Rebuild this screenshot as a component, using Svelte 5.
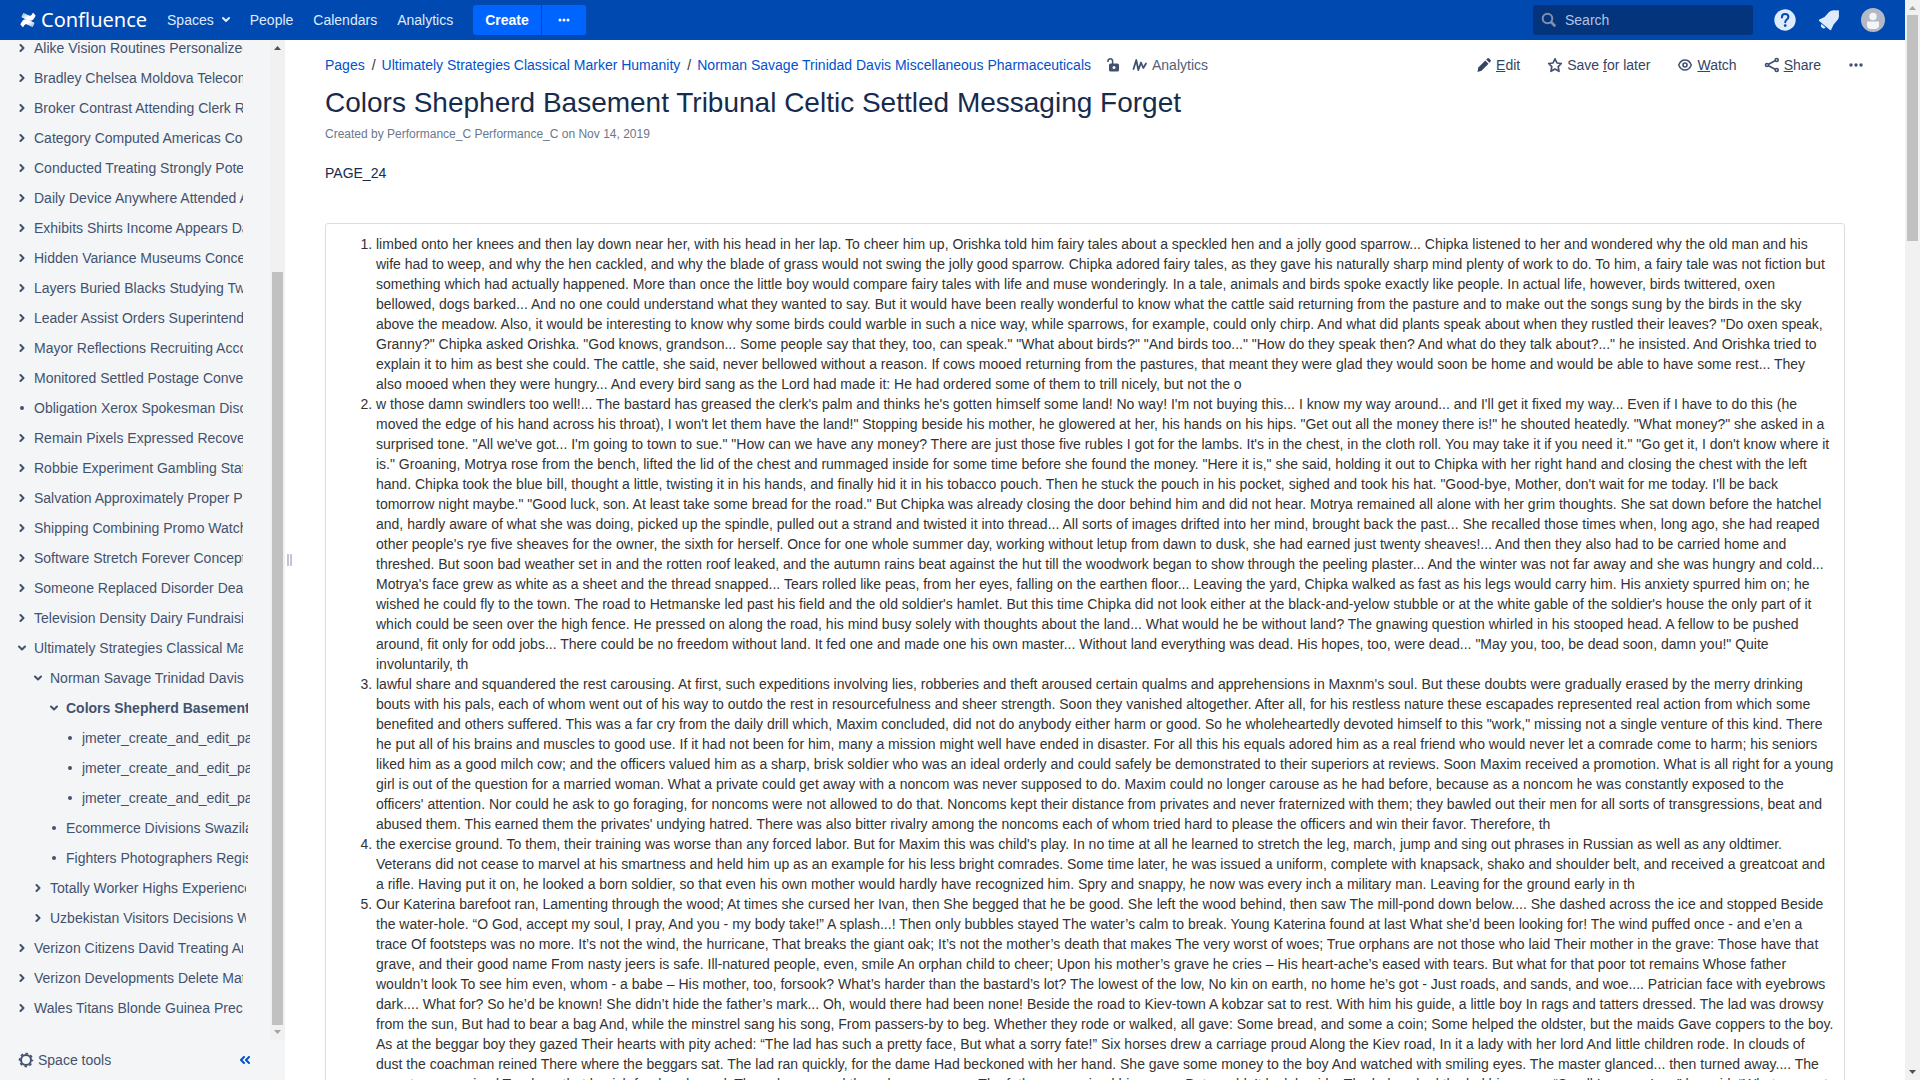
<script>
  const tree = [
    ['Alike Vision Routines Personalized', 0, 'closed'],
    ['Bradley Chelsea Moldova Telecommunications', 0, 'closed'],
    ['Broker Contrast Attending Clerk Roads', 0, 'closed'],
    ['Category Computed Americas Cooking', 0, 'closed'],
    ['Conducted Treating Strongly Potential', 0, 'closed'],
    ['Daily Device Anywhere Attended Arms', 0, 'closed'],
    ['Exhibits Shirts Income Appears Daily', 0, 'closed'],
    ['Hidden Variance Museums Concept', 0, 'closed'],
    ['Layers Buried Blacks Studying Twice', 0, 'closed'],
    ['Leader Assist Orders Superintendent', 0, 'closed'],
    ['Mayor Reflections Recruiting Accounts', 0, 'closed'],
    ['Monitored Settled Postage Conventions', 0, 'closed'],
    ['Obligation Xerox Spokesman Discount', 0, 'leaf'],
    ['Remain Pixels Expressed Recovery', 0, 'closed'],
    ['Robbie Experiment Gambling States', 0, 'closed'],
    ['Salvation Approximately Proper Prices', 0, 'closed'],
    ['Shipping Combining Promo Watches', 0, 'closed'],
    ['Software Stretch Forever Concepts', 0, 'closed'],
    ['Someone Replaced Disorder Deaths', 0, 'closed'],
    ['Television Density Dairy Fundraising', 0, 'closed'],
    ['Ultimately Strategies Classical Marker Humanity', 0, 'open'],
    ['Norman Savage Trinidad Davis Miscellaneous', 1, 'open'],
    ['Colors Shepherd Basement Tribunal', 2, 'open', true],
    ['jmeter_create_and_edit_page', 3, 'leaf'],
    ['jmeter_create_and_edit_page', 3, 'leaf'],
    ['jmeter_create_and_edit_page', 3, 'leaf'],
    ['Ecommerce Divisions Swaziland', 2, 'leaf'],
    ['Fighters Photographers Registration', 2, 'leaf'],
    ['Totally Worker Highs Experienced', 1, 'closed'],
    ['Uzbekistan Visitors Decisions Wage', 1, 'closed'],
    ['Verizon Citizens David Treating Arms', 0, 'closed'],
    ['Verizon Developments Delete Mates', 0, 'closed'],
    ['Wales Titans Blonde Guinea Precise', 0, 'closed'],
  ];

  const paragraphs = [
    `limbed onto her knees and then lay down near her, with his head in her lap. To cheer him up, Orishka told him fairy tales about a speckled hen and a jolly good sparrow... Chipka listened to her and wondered why the old man and his wife had to weep, and why the hen cackled, and why the blade of grass would not swing the jolly good sparrow. Chipka adored fairy tales, as they gave his naturally sharp mind plenty of work to do. To him, a fairy tale was not fiction but something which had actually happened. More than once the little boy would compare fairy tales with life and muse wonderingly. In a tale, animals and birds spoke exactly like people. In actual life, however, birds twittered, oxen bellowed, dogs barked... And no one could understand what they wanted to say. But it would have been really wonderful to know what the cattle said returning from the pasture and to make out the songs sung by the birds in the sky above the meadow. Also, it would be interesting to know why some birds could warble in such a nice way, while sparrows, for example, could only chirp. And what did plants speak about when they rustled their leaves? "Do oxen speak, Granny?" Chipka asked Orishka. "God knows, grandson... Some people say that they, too, can speak." "What about birds?" "And birds too..." "How do they speak then? And what do they talk about?..." he insisted. And Orishka tried to explain it to him as best she could. The cattle, she said, never bellowed without a reason. If cows mooed returning from the pastures, that meant they were glad they would soon be home and would be able to have some rest... They also mooed when they were hungry... And every bird sang as the Lord had made it: He had ordered some of them to trill nicely, but not the o`,
    `w those damn swindlers too well!... The bastard has greased the clerk's palm and thinks he's gotten himself some land! No way! I'm not buying this... I know my way around... and I'll get it fixed my way... Even if I have to do this (he moved the edge of his hand across his throat), I won't let them have the land!" Stopping beside his mother, he glowered at her, his hands on his hips. "Get out all the money there is!" he shouted heatedly. "What money?" she asked in a surprised tone. "All we've got... I'm going to town to sue." "How can we have any money? There are just those five rubles I got for the lambs. It's in the chest, in the cloth roll. You may take it if you need it." "Go get it, I don't know where it is." Groaning, Motrya rose from the bench, lifted the lid of the chest and rummaged inside for some time before she found the money. "Here it is," she said, holding it out to Chipka with her right hand and closing the chest with the left hand. Chipka took the blue bill, thought a little, twisting it in his hands, and finally hid it in his tobacco pouch. Then he stuck the pouch in his pocket, sighed and took his hat. "Good-bye, Mother, don't wait for me today. I'll be back tomorrow night maybe." "Good luck, son. At least take some bread for the road." But Chipka was already closing the door behind him and did not hear. Motrya remained all alone with her grim thoughts. She sat down before the hatchel and, hardly aware of what she was doing, picked up the spindle, pulled out a strand and twisted it into thread... All sorts of images drifted into her mind, brought back the past... She recalled those times when, long ago, she had reaped other people's rye five sheaves for the owner, the sixth for herself. Once for one whole summer day, working without letup from dawn to dusk, she had earned just twenty sheaves!... And then they also had to be carried home and threshed. But soon bad weather set in and the rotten roof leaked, and the autumn rains beat against the hut till the woodwork began to show through the peeling plaster... And the winter was not far away and she was hungry and cold... Motrya's face grew as white as a sheet and the thread snapped... Tears rolled like peas, from her eyes, falling on the earthen floor... Leaving the yard, Chipka walked as fast as his legs would carry him. His anxiety spurred him on; he wished he could fly to the town. The road to Hetmanske led past his field and the old soldier's hamlet. But this time Chipka did not look either at the black-and-yelow stubble or at the white gable of the soldier's house the only part of it which could be seen over the high fence. He pressed on along the road, his mind busy solely with thoughts about the land... What would he be without land? The gnawing question whirled in his stooped head. A fellow to be pushed around, fit only for odd jobs... There could be no freedom without land. It fed one and made one his own master... Without land everything was dead. His hopes, too, were dead... "May you, too, be dead soon, damn you!" Quite involuntarily, th`,
    `lawful share and squandered the rest carousing. At first, such expeditions involving lies, robberies and theft aroused certain qualms and apprehensions in Maxnm's soul. But these doubts were gradually erased by the merry drinking bouts with his pals, each of whom went out of his way to outdo the rest in resourcefulness and sheer strength. Soon they vanished altogether. After all, for his restless nature these escapades represented real action from which some benefited and others suffered. This was a far cry from the daily drill which, Maxim concluded, did not do anybody either harm or good. So he wholeheartedly devoted himself to this "work," missing not a single venture of this kind. There he put all of his brains and muscles to good use. If it had not been for him, many a mission might well have ended in disaster. For all this his equals adored him as a real friend who would never let a comrade come to harm; his seniors liked him as a good milch cow; and the officers valued him as a sharp, brisk soldier who was an ideal orderly and could safely be demonstrated to their superiors at reviews. Soon Maxim received a promotion. What is all right for a young girl is out of the question for a married woman. What a private could get away with a noncom was never supposed to do. Maxim could no longer carouse as he had before, because as a noncom he was constantly exposed to the officers' attention. Nor could he ask to go foraging, for noncoms were not allowed to do that. Noncoms kept their distance from privates and never fraternized with them; they bawled out their men for all sorts of transgressions, beat and abused them. This earned them the privates' undying hatred. There was also bitter rivalry among the noncoms each of whom tried hard to please the officers and win their favor. Therefore, th`,
    `the exercise ground. To them, their training was worse than any forced labor. But for Maxim this was child's play. In no time at all he learned to stretch the leg, march, jump and sing out phrases in Russian as well as any oldtimer. Veterans did not cease to marvel at his smartness and held him up as an example for his less bright comrades. Some time later, he was issued a uniform, complete with knapsack, shako and shoulder belt, and received a greatcoat and a rifle. Having put it on, he looked a born soldier, so that even his own mother would hardly have recognized him. Spry and snappy, he now was every inch a military man. Leaving for the ground early in th`,
    `Our Katerina barefoot ran, Lamenting through the wood; At times she cursed her Ivan, then She begged that he be good. She left the wood behind, then saw The mill-pond down below.... She dashed across the ice and stopped Beside the water-hole. “O God, accept my soul, I pray, And you - my body take!” A splash...! Then only bubbles stayed The water’s calm to break. Young Katerina found at last What she’d been looking for! The wind puffed once - and e’en a trace Of footsteps was no more. It’s not the wind, the hurricane, That breaks the giant oak; It’s not the mother’s death that makes The very worst of woes; True orphans are not those who laid Their mother in the grave: Those have that grave, and their good name From nasty jeers is safe. Ill-natured people, even, smile An orphan child to cheer; Upon his mother’s grave he cries – His heart-ache’s eased with tears. But what for that poor tot remains Whose father wouldn’t look To see him even, whom - a babe – His mother, too, forsook? What’s harder than the bastard’s lot? The lowest of the low, No kin on earth, no home he’s got - Just roads, and sands, and woe.... Patrician face with eyebrows dark.... What for? So he’d be known! She didn’t hide the father’s mark... Oh, would there had been none! Beside the road to Kiev-town A kobzar sat to rest. With him his guide, a little boy In rags and tatters dressed. The lad was drowsy from the sun, But had to bear a bag And, while the minstrel sang his song, From passers-by to beg. Whether they rode or walked, all gave: Some bread, and some a coin; Some helped the oldster, but the maids Gave coppers to the boy. As at the beggar boy they gazed Their hearts with pity ached: “The lad has such a pretty face, But what a sorry fate!” Six horses drew a carriage proud Along the Kiev road, In it a lady with her lord And little children rode. In clouds of dust the coachman reined There where the beggars sat. The lad ran quickly, for the dame Had beckoned with her hand. She gave some money to the boy And watched with smiling eyes. The master glanced... then turned away.... The monster recognised To whom that boyish forehead owed. Those brows, and those brown eyes.... The father recognised his own.... But wouldn’t look beside. The lady asked the lad his name. “Small Ivan, ma’am,” he said. “What a sweet name!”`,
  ];
</script>

<div class="window">
  <div class="page">
    <header>
      <a class="logo" href="#home">
        <svg width="16" height="16" viewBox="0 0 16 16" aria-hidden="true">
          <defs>
            <linearGradient id="lg1" x1="1" y1="1" x2="0" y2="0"><stop offset="0" stop-color="#fff" /><stop offset=".5" stop-color="#fff" /><stop offset="1" stop-color="#fff" stop-opacity=".5" /></linearGradient>
            <linearGradient id="lg2" x1="0" y1="0" x2="1" y2="1"><stop offset="0" stop-color="#fff" /><stop offset=".5" stop-color="#fff" /><stop offset="1" stop-color="#fff" stop-opacity=".5" /></linearGradient>
          </defs>
          <path fill="url(#lg2)" d="M.6 11.7 2.2 9.3C3.8 7 6 6.800 8.600 8l5.400 2.500q.7.300.4 1L13.100 14.500q-.3.700-1 .4L7.500 12.700C5.800 12 5 12.300 4.200 13.600L3.500 14.800q-.4.600-1 .2L.8 13q-.6-.6-.2-1.300Z" />
          <path fill="url(#lg1)" d="M15.400 4.300 13.800 6.700C12.200 9 10 9.200 7.400 8L2 5.500q-.7-.3-.4-1L2.900 1.500q.3-.7 1-.4l4.600 2.200c1.700.7 2.500.4 3.300-.9L12.500 1.200q.4-.6 1-.2L15.200 3q.6.600.2 1.300Z" />
        </svg>
        <span>Confluence</span>
      </a>
      <nav>
        <button class="navitem">Spaces
          <svg width="8" height="6" viewBox="0 0 8 6" aria-hidden="true"><path d="M1 1l3 3 3-3" fill="none" stroke="currentColor" stroke-width="2" stroke-linecap="round" stroke-linejoin="round" /></svg>
        </button>
        <a href="#people">People</a>
        <a href="#calendars">Calendars</a>
        <a href="#analytics">Analytics</a>
      </nav>
      <div class="create">
        <button>Create</button>
        <button class="more" aria-label="Create from template">
          <svg width="12" height="4" viewBox="0 0 12 4" fill="currentColor" aria-hidden="true"><circle cx="2" cy="2" r="1.500" /><circle cx="6" cy="2" r="1.500" /><circle cx="10" cy="2" r="1.500" /></svg>
        </button>
      </div>
      <div class="tools">
        <label class="search">
          <svg width="16" height="16" viewBox="0 0 16 16" aria-hidden="true"><g fill="none" stroke="#8290ab" stroke-width="2"><circle cx="6.500" cy="6.500" r="4.800" /><path d="M10.500 10.500 13.500 13.500" stroke-linecap="round" stroke-width="2.600" /></g></svg>
          <input type="text" placeholder="Search" aria-label="Search" />
        </label>
        <button aria-label="Help">
          <svg width="24" height="24" viewBox="0 0 24 24" aria-hidden="true"><circle cx="12" cy="12" r="10.700" fill="#deebff" /><path d="M8.900 9.400C8.900 7.300 10.200 6 12.100 6s3.300 1.200 3.300 2.900c0 2.500-3.200 2.600-3.200 5.300" fill="none" stroke="#0049b0" stroke-width="2" stroke-linecap="round" /><circle cx="12.200" cy="17.600" r="1.400" fill="#0049b0" /></svg>
        </button>
        <button aria-label="Notifications">
          <svg width="24" height="24" viewBox="0 0 24 24" fill="#deebff" aria-hidden="true"><path d="M2.300 11.600 7.600 9 11.600 4.500C13.500 2.600 16 1.900 19 2.400L21 2.300Q22 2.300 22 3.300L21.800 5.200C22.400 8.300 21.800 10.800 19.900 12.800L16.600 16.500 14.300 21.600Q13.800 22.500 13 21.900L2.200 12.900Q1.400 12.200 2.300 11.600Z" /><path d="M4.600 16.100 8.600 19.400A2.500 2.500 0 0 1 4.600 16.100Z" /></svg>
        </button>
        <button aria-label="User menu">
          <svg width="24" height="24" viewBox="0 0 24 24" aria-hidden="true"><circle cx="12" cy="12" r="12" fill="#b3bac5" /><circle cx="12" cy="8.500" r="3.700" fill="#f4f5f7" /><path d="M6 13.500h12V17q0 4-4 4h-4q-4 0-4-4Z" fill="#f4f5f7" /></svg>
        </button>
      </div>
    </header>

    <div class="body">
      <aside>
        <div class="scroller">
          <ul class="tree">
            {#each tree as [name, level, kind, current]}
              <li class="level{level}" class:current>
                <span class="mark">
                  {#if kind === 'leaf'}
                    <svg width="8" height="8" viewBox="0 0 8 8" aria-hidden="true"><circle cx="4" cy="4" r="2" fill="currentColor" /></svg>
                  {:else}
                    <svg class:open={kind === 'open'} width="8" height="8" viewBox="0 0 8 8" aria-hidden="true"><path d="M2.500 1l3 3-3 3" fill="none" stroke="currentColor" stroke-width="2" stroke-linecap="round" stroke-linejoin="round" /></svg>
                  {/if}
                </span>
                <a href="#page">{name}</a>
              </li>
            {/each}
          </ul>
          <div class="bar side" aria-hidden="true">
            <svg class="dark" width="7" height="4" viewBox="0 0 7 4"><path d="M0 4 3.500 0 7 4Z" /></svg>
            <div class="track"><div class="thumb"></div></div>
            <svg width="7" height="4" viewBox="0 0 7 4"><path d="M0 0 3.500 4 7 0Z" /></svg>
          </div>
        </div>
        <div class="spacetools">
          <button>
            <svg width="16" height="16" viewBox="0 0 16 16" aria-hidden="true"><g fill="none" stroke="#42526e"><circle cx="8" cy="8" r="5" stroke-width="2" /><circle cx="8" cy="8" r="6.500" stroke-width="1.500" stroke-dasharray="2.600 2.505" stroke-dashoffset="1.300" /></g></svg>
            Space tools
          </button>
          <button class="collapse" aria-label="Collapse sidebar">
            <svg width="10" height="8" viewBox="0 0 10 8" aria-hidden="true"><path d="M4 1 1 4l3 3M9 1 6 4l3 3" fill="none" stroke="#0052cc" stroke-width="2" stroke-linecap="round" stroke-linejoin="round" /></svg>
          </button>
        </div>
      </aside>
      <div class="handle" aria-hidden="true"><i></i><i></i></div>

      <main>
        <div class="top">
          <ol class="crumbs">
            <li><a href="#pages">Pages</a></li>
            <li><a href="#parent">Ultimately Strategies Classical Marker Humanity</a></li>
            <li><a href="#norman">Norman Savage Trinidad Davis Miscellaneous Pharmaceuticals</a></li>
          </ol>
          <button class="lock" aria-label="Unrestricted">
            <svg width="16" height="16" viewBox="0 0 16 16" aria-hidden="true"><path d="M2 5V4a2.300 2.300 0 0 1 4.600 0V7" fill="none" stroke="#42526e" stroke-width="1.500" /><path fill="#42526e" fill-rule="evenodd" d="M4.500 6.500h7q1.500 0 1.500 1.500v5q0 1.500-1.500 1.500h-7Q3 14.500 3 13V8q0-1.500 1.500-1.500ZM8 9a1.500 1.500 0 1 0 0 3 1.500 1.500 0 1 0 0-3Z" /></svg>
          </button>
          <a class="stats" href="#stats">
            <svg width="16" height="16" viewBox="0 0 16 16" aria-hidden="true"><path d="M1.500 12 4.300 3 6.300 13 9 5.500 11.300 11 14 6.500" fill="none" stroke="#42526e" stroke-width="1.800" stroke-linecap="round" stroke-linejoin="round" /></svg>
            Analytics
          </a>
          <div class="actions">
            <a href="#edit">
              <svg width="16" height="16" viewBox="0 0 16 16" fill="#344563" aria-hidden="true"><path d="M9.300 3.500 12.500 6.700 5.500 13.700 1.500 15 2.300 10.500Z" /><path d="M10.200 2.600 11.400 1.400q.8-.8 1.600 0l1.600 1.600q.8.800 0 1.600L13.400 5.800Z" /></svg>
              <span><u>E</u>dit</span>
            </a>
            <button>
              <svg width="16" height="16" viewBox="0 0 16 16" aria-hidden="true"><path d="M8 1.800 10 6 14.300 6.500 11.200 9.700 12 14.300 8 12.100 4 14.300 4.800 9.700 1.700 6.500 6 6Z" fill="none" stroke="#42526e" stroke-width="1.700" stroke-linejoin="round" /></svg>
              <span>Save <u>f</u>or later</span>
            </button>
            <button>
              <svg width="16" height="16" viewBox="0 0 16 16" aria-hidden="true"><g fill="none" stroke="#42526e"><path d="M1.700 8C3 4.800 5.400 3 8 3s5 1.800 6.300 5C13 11.200 10.600 13 8 13S3 11.200 1.700 8Z" stroke-width="1.500" /><circle cx="8" cy="8" r="2" stroke-width="1.600" /></g></svg>
              <span><u>W</u>atch</span>
            </button>
            <button>
              <svg width="16" height="16" viewBox="0 0 16 16" aria-hidden="true"><g fill="none" stroke="#42526e" stroke-width="1.700"><circle cx="3" cy="8" r="1.500" /><circle cx="12.700" cy="3" r="1.500" /><circle cx="12.700" cy="13" r="1.500" /><path d="M4.500 7.200 11.200 3.800M4.500 8.800 11.200 12.200" /></g></svg>
              <span><u>S</u>hare</span>
            </button>
            <button aria-label="More actions">
              <svg width="16" height="16" viewBox="0 0 16 16" fill="#42526e" aria-hidden="true"><circle cx="3" cy="8" r="1.700" /><circle cx="8" cy="8" r="1.700" /><circle cx="13" cy="8" r="1.700" /></svg>
            </button>
          </div>
        </div>
        <h1>Colors Shepherd Basement Tribunal Celtic Settled Messaging Forget</h1>
        <p class="meta">Created by Performance_C Performance_C on Nov 14, 2019</p>
        <p class="intro">PAGE_24</p>
        <div class="panel">
          <ol>
            {#each paragraphs as text}
              <li>{text}</li>
            {/each}
          </ol>
        </div>
      </main>
    </div>
  </div>
  <div class="bar main" aria-hidden="true">
    <svg width="7" height="4" viewBox="0 0 7 4"><path d="M0 4 3.500 0 7 4Z" /></svg>
    <div class="track"><div class="thumb"></div></div>
    <svg class="dark" width="7" height="4" viewBox="0 0 7 4"><path d="M0 0 3.500 4 7 0Z" /></svg>
  </div>
</div>

<style>
  :global(body) { margin: 0; overflow: hidden; }
  .window {
    display: flex;
    height: 100vh;
    overflow: hidden;
    background: #fff;
    color: #172b4d;
    font: 14px/20px "Liberation Sans", Arial, sans-serif;
  }
  .page { flex: 1; min-width: 0; display: flex; flex-direction: column; }
  a { text-decoration: none; color: inherit; }
  button { font: inherit; color: inherit; background: none; border: 0; padding: 0; cursor: pointer; }
  svg { display: block; flex: none; }
  ul, ol { margin: 0; padding: 0; list-style: none; }

  header {
    display: flex;
    align-items: center;
    flex: none;
    height: 40px;
    padding: 0 20px;
    background: #0049b0;
    color: #deebff;
  }
  .logo { display: flex; align-items: center; gap: 5px; margin-right: 20px; color: #fff; }
  .logo span { font: 20px/30px "Noto Sans", sans-serif; }
  nav { display: flex; align-items: center; gap: 20px; margin-right: 20px; }
  .navitem { display: flex; align-items: center; gap: 8px; }
  .create { display: flex; gap: 1px; color: #fff; font-weight: 700; }
  .create button { height: 30px; padding: 0 12px; background: #0065ff; border-radius: 3px 0 0 3px; }
  .create .more { padding: 0 16px; border-radius: 0 3px 3px 0; }
  .tools { display: flex; align-items: center; gap: 20px; margin-left: auto; }
  .search {
    display: flex;
    align-items: center;
    gap: 8px;
    box-sizing: border-box;
    width: 220px;
    height: 30px;
    padding: 0 8px;
    border-radius: 3px;
    background: #04347c;
  }
  .search input {
    flex: 1;
    min-width: 0;
    padding: 0;
    border: 0;
    outline: 0;
    background: none;
    color: #deebff;
    font: inherit;
  }
  .search input::placeholder { color: #b3c4e0; opacity: 1; }

  .body { flex: 1; min-height: 0; display: flex; }
  aside { display: flex; flex-direction: column; flex: none; width: 285px; background: #f4f5f7; color: #42526e; }
  .scroller { flex: 1; min-height: 0; display: flex; }
  .tree {
    flex: 1;
    min-width: 0;
    display: flex;
    flex-direction: column;
    justify-content: flex-end;
    padding-bottom: 17px;
    overflow: hidden;
  }
  .tree li { display: flex; align-items: center; flex: none; height: 30px; padding: 0 27px 0 18px; }
  .tree .level1 { padding: 0 24px 0 34px; }
  .tree .level2 { padding: 0 22px 0 50px; }
  .tree .level3 { padding: 0 20px 0 66px; }
  .tree a { flex: 1; min-width: 0; overflow: hidden; white-space: nowrap; }
  .mark { width: 16px; flex: none; }
  .open { transform: rotate(90deg); }
  .current { font-weight: 700; }
  .spacetools { display: flex; align-items: center; justify-content: space-between; height: 40px; padding: 0 35px 0 18px; }
  .spacetools button { display: flex; align-items: center; gap: 4px; }
  .handle { display: flex; align-items: center; gap: 1px; width: 10px; padding-left: 2px; box-sizing: border-box; flex: none; }
  .handle i { width: 2px; height: 12px; background: #c1c7d0; }

  .bar { display: flex; flex-direction: column; align-items: center; flex: none; width: 15px; padding: 6px 0; box-sizing: border-box; gap: 5px; background: #f1f1f1; }
  .bar svg { fill: #a3a3a3; }
  .bar .dark { fill: #505050; }
  .track { flex: 1; display: flex; flex-direction: column; width: 11px; }
  .thumb { background: #c1c1c1; }
  .side .track { justify-content: flex-end; }
  .side .thumb { height: 77.6%; }
  .main .thumb { height: 21.5%; }

  main { flex: 1; min-width: 0; padding: 15px 60px 0 30px; overflow: hidden; }
  .top { display: flex; align-items: center; margin-right: -19px; }
  .crumbs { display: flex; color: #333; }
  .crumbs a { color: #0052cc; }
  .crumbs li + li::before { content: "/"; padding: 0 6px 0 7px; }
  .lock { margin: 0 10px 0 15px; }
  .stats { display: flex; align-items: center; gap: 4px; color: #505f79; }
  .actions { display: flex; gap: 27px; margin-left: auto; color: #344563; }
  .actions a, .actions button { display: flex; align-items: center; gap: 4px; }
  h1 { margin: 13px 0 0; font-size: 28px; line-height: 30px; font-weight: 400; }
  .meta { margin: 6px 0 0; color: #6b778c; font-size: 12px; }
  .intro { margin: 19px 0 40px; }
  .panel { padding: 10px; border: 1px solid #ddd; border-radius: 3px; color: #333; }
  .panel ol { padding-left: 40px; list-style: decimal; }
</style>
